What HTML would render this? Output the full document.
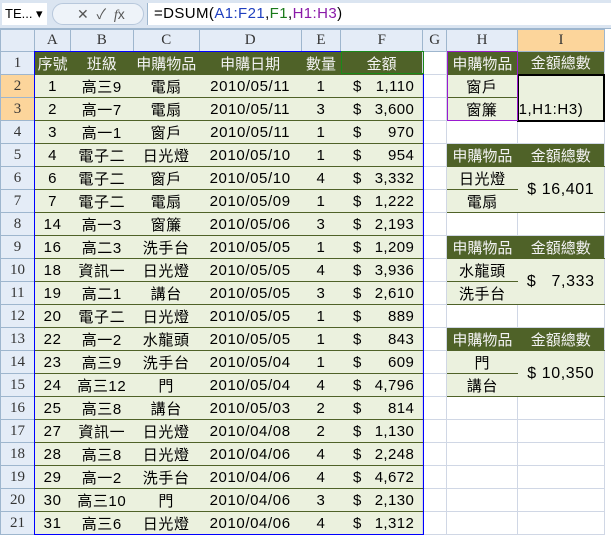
<!DOCTYPE html>
<html><head><meta charset="utf-8"><style>
*{margin:0;padding:0;box-sizing:border-box}
body{width:611px;height:539px;overflow:hidden;background:#fff;font-family:"Liberation Sans","Noto Sans CJK TC",sans-serif;font-size:15px;position:relative}
.fb{position:absolute;left:0;top:0;width:611px;height:29px;background:#dbe5f1;border-bottom:1px solid #9eb6ce}
.nb{position:absolute;left:2px;top:3px;width:45px;height:22px;background:#fff;font-size:13px;line-height:22px;padding-left:3px}
.fx{position:absolute;left:147px;top:3px;width:464px;height:22px;background:#fff;font-size:15px;line-height:22px;padding-left:6px;border-left:1px solid #9eb6ce;letter-spacing:.4px}
table{position:absolute;left:0;top:29px;border-collapse:collapse;table-layout:fixed}
td{height:23px;padding:0;text-align:center;white-space:nowrap;overflow:hidden;border:1px solid #d0d7e5;letter-spacing:.6px}
tr.ch td{height:22px;background:#e4ecf7;border:1px solid #9eb6ce;color:#333;font-family:"Liberation Serif",serif;font-size:15px;letter-spacing:0}
td.rh{background:#e4ecf7;border:1px solid #9eb6ce;color:#333;font-family:"Liberation Serif",serif;font-size:15px;text-align:center;letter-spacing:0}
td.sel,tr.ch td.sel{background:#fcd59b}
td.d{background:#ebf1de;border-left:none;border-right:none;border-top:1px solid #4f6228;border-bottom:1px solid #4f6228}
td.h,td.d.h{background:#4f6228;color:#f2f2f2;border-left:none;border-right:none;border-top:1px solid #4f6228;border-bottom:1px solid #4f6228;letter-spacing:0}
td.f{text-align:right;padding-right:8px;letter-spacing:.4px}
td.f span{float:left;padding-left:12px}
</style></head><body>
<div class="fb"><div class="nb">TE... ▾</div>
<div style="position:absolute;left:52px;top:3px;width:92px;height:22px;border-radius:11px;background:#eef3f9;border:1px solid #b8c8dc;font-size:14px;color:#555;line-height:20px;padding-left:24px">✕ &nbsp;✓ &nbsp;<i style="font-family:'Liberation Serif',serif">f</i>x</div>
<div class="fx">=DSUM(<span style="color:#1f3fbf">A1:F21</span>,<span style="color:#1a7a1a">F1</span>,<span style="color:#8a1aa8">H1:H3</span>)</div></div>
<table>
<colgroup><col style="width:34px"><col style="width:36px"><col style="width:63px"><col style="width:66px"><col style="width:102px"><col style="width:40px"><col style="width:82px"><col style="width:24px"><col style="width:71px"><col style="width:87px"><col style="width:6px"></colgroup>
<tr class="ch"><td></td><td>A</td><td>B</td><td>C</td><td>D</td><td>E</td><td>F</td><td>G</td><td>H</td><td class="sel">I</td><td></td></tr>
<tr><td class="rh">1</td><td class="h">序號</td><td class="h">班級</td><td class="h">申購物品</td><td class="h">申購日期</td><td class="h">數量</td><td class="h">金額</td><td></td><td class="h">申購物品</td><td class="h">金額總數</td><td></td></tr>
<tr><td class="rh sel">2</td><td class="d">1</td><td class="d">高三9</td><td class="d">電扇</td><td class="d">2010/05/11</td><td class="d">1</td><td class="d f"><span>$</span>1,110</td><td></td><td class="d">窗戶</td><td class="d" rowspan="2" style="text-align:left;vertical-align:bottom;padding-bottom:2px;border:2px solid #000">1,H1:H3)</td><td></td></tr>
<tr><td class="rh sel">3</td><td class="d">2</td><td class="d">高一7</td><td class="d">電扇</td><td class="d">2010/05/11</td><td class="d">3</td><td class="d f"><span>$</span>3,600</td><td></td><td class="d">窗簾</td><td></td></tr>
<tr><td class="rh">4</td><td class="d">3</td><td class="d">高一1</td><td class="d">窗戶</td><td class="d">2010/05/11</td><td class="d">1</td><td class="d f"><span>$</span>970</td><td></td><td></td><td></td><td></td></tr>
<tr><td class="rh">5</td><td class="d">4</td><td class="d">電子二</td><td class="d">日光燈</td><td class="d">2010/05/10</td><td class="d">1</td><td class="d f"><span>$</span>954</td><td></td><td class="h">申購物品</td><td class="h">金額總數</td><td></td></tr>
<tr><td class="rh">6</td><td class="d">6</td><td class="d">電子二</td><td class="d">窗戶</td><td class="d">2010/05/10</td><td class="d">4</td><td class="d f"><span>$</span>3,332</td><td></td><td class="d">日光燈</td><td class="d" rowspan="2" style="font-size:16px">$ 16,401</td><td></td></tr>
<tr><td class="rh">7</td><td class="d">7</td><td class="d">電子二</td><td class="d">電扇</td><td class="d">2010/05/09</td><td class="d">1</td><td class="d f"><span>$</span>1,222</td><td></td><td class="d">電扇</td><td></td></tr>
<tr><td class="rh">8</td><td class="d">14</td><td class="d">高一3</td><td class="d">窗簾</td><td class="d">2010/05/06</td><td class="d">3</td><td class="d f"><span>$</span>2,193</td><td></td><td></td><td></td><td></td></tr>
<tr><td class="rh">9</td><td class="d">16</td><td class="d">高二3</td><td class="d">洗手台</td><td class="d">2010/05/05</td><td class="d">1</td><td class="d f"><span>$</span>1,209</td><td></td><td class="h">申購物品</td><td class="h">金額總數</td><td></td></tr>
<tr><td class="rh">10</td><td class="d">18</td><td class="d">資訊一</td><td class="d">日光燈</td><td class="d">2010/05/05</td><td class="d">4</td><td class="d f"><span>$</span>3,936</td><td></td><td class="d">水龍頭</td><td class="d" rowspan="2" style="font-size:16px">$ &nbsp;&nbsp;7,333</td><td></td></tr>
<tr><td class="rh">11</td><td class="d">19</td><td class="d">高二1</td><td class="d">講台</td><td class="d">2010/05/05</td><td class="d">3</td><td class="d f"><span>$</span>2,610</td><td></td><td class="d">洗手台</td><td></td></tr>
<tr><td class="rh">12</td><td class="d">20</td><td class="d">電子二</td><td class="d">日光燈</td><td class="d">2010/05/05</td><td class="d">1</td><td class="d f"><span>$</span>889</td><td></td><td></td><td></td><td></td></tr>
<tr><td class="rh">13</td><td class="d">22</td><td class="d">高一2</td><td class="d">水龍頭</td><td class="d">2010/05/05</td><td class="d">1</td><td class="d f"><span>$</span>843</td><td></td><td class="h">申購物品</td><td class="h">金額總數</td><td></td></tr>
<tr><td class="rh">14</td><td class="d">23</td><td class="d">高三9</td><td class="d">洗手台</td><td class="d">2010/05/04</td><td class="d">1</td><td class="d f"><span>$</span>609</td><td></td><td class="d">門</td><td class="d" rowspan="2" style="font-size:16px">$ 10,350</td><td></td></tr>
<tr><td class="rh">15</td><td class="d">24</td><td class="d">高三12</td><td class="d">門</td><td class="d">2010/05/04</td><td class="d">4</td><td class="d f"><span>$</span>4,796</td><td></td><td class="d">講台</td><td></td></tr>
<tr><td class="rh">16</td><td class="d">25</td><td class="d">高三8</td><td class="d">講台</td><td class="d">2010/05/03</td><td class="d">2</td><td class="d f"><span>$</span>814</td><td></td><td></td><td></td><td></td></tr>
<tr><td class="rh">17</td><td class="d">27</td><td class="d">資訊一</td><td class="d">日光燈</td><td class="d">2010/04/08</td><td class="d">2</td><td class="d f"><span>$</span>1,130</td><td></td><td></td><td></td><td></td></tr>
<tr><td class="rh">18</td><td class="d">28</td><td class="d">高三8</td><td class="d">日光燈</td><td class="d">2010/04/06</td><td class="d">4</td><td class="d f"><span>$</span>2,248</td><td></td><td></td><td></td><td></td></tr>
<tr><td class="rh">19</td><td class="d">29</td><td class="d">高一2</td><td class="d">洗手台</td><td class="d">2010/04/06</td><td class="d">4</td><td class="d f"><span>$</span>4,672</td><td></td><td></td><td></td><td></td></tr>
<tr><td class="rh">20</td><td class="d">30</td><td class="d">高三10</td><td class="d">門</td><td class="d">2010/04/06</td><td class="d">3</td><td class="d f"><span>$</span>2,130</td><td></td><td></td><td></td><td></td></tr>
<tr><td class="rh">21</td><td class="d">31</td><td class="d">高三6</td><td class="d">日光燈</td><td class="d">2010/04/06</td><td class="d">4</td><td class="d f"><span>$</span>1,312</td><td></td><td></td><td></td><td></td></tr>
</table>
<div style="position:absolute;left:34px;top:51px;width:390px;height:484px;border:1px solid #0000ff"></div>
<div style="position:absolute;left:341px;top:51px;width:83px;height:23px;border:1px solid #1a8a1a"></div>
<div style="position:absolute;left:447px;top:51px;width:71px;height:70px;border:1px solid #9a1ad0"></div>
<div style="position:absolute;left:605px;top:29px;width:6px;height:510px;background:#fff"></div>
</body></html>
